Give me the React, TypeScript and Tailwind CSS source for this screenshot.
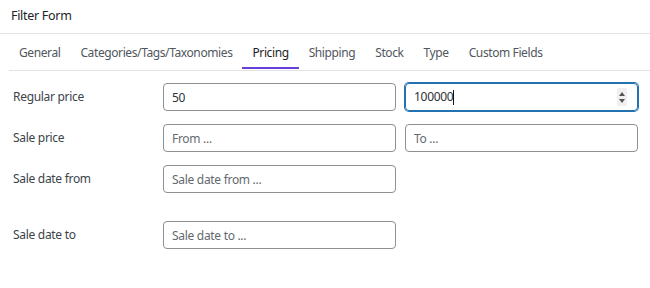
import React from "react";

const font = { fontFamily: '"Noto Sans", "Open Sans", Arial, sans-serif', letterSpacing: "-0.3px" };

function Field({ placeholder, value }: { placeholder?: string; value?: string }) {
  return (
    <input
      readOnly
      defaultValue={value}
      placeholder={placeholder}
      className="w-[233px] h-[28px] rounded-[4px] border border-[#8c8f94] bg-white px-[8px] text-[12px] text-[#2c3338] placeholder:text-[#646970] outline-none"
      style={font}
    />
  );
}

export default function App() {
  const tabs = ["General", "Categories/Tags/Taxonomies", "Pricing", "Shipping", "Stock", "Type", "Custom Fields"];
  return (
    <div className="w-[650px] h-[288px] bg-white text-[#1d2327] overflow-hidden" style={font}>
      <div className="h-[34px] border-b border-[#e3e3e3] px-[11px] flex items-center text-[12.5px] text-[#1d2327]">
        Filter Form
      </div>
      <div className="ml-[9px] h-[37px] border-b border-[#e3e3e3] flex items-stretch">
        {tabs.map((t) => (
          <div
            key={t}
            className={
              "px-[10px] flex items-center text-[12px] tracking-[-0.4px] border-b-2 mb-[1px] pt-[4px] " +
              (t === "Pricing" ? "border-[#6741d9] text-[#1e1e1e]" : "border-transparent text-[#50575e]")
            }
          >
            {t}
          </div>
        ))}
      </div>
      <div className="pl-[13px] pt-[12px] flex flex-col">
        <div className="flex items-center h-[28px]">
          <div className="w-[150px] text-[12px] text-[#3c434a]">Regular price</div>
          <Field value="50" />
          <div className="ml-[9px] w-[233px] h-[28px] rounded-[4px] border border-[#2271b1] shadow-[0_0_0_1px_#2271b1] flex items-center pl-[8px] pr-[10px] text-[12px] text-[#2c3338]">
            <span>100000</span>
            <span className="w-px h-[15px] bg-[#111]" />
            <div className="ml-auto w-[10px] h-[18px] bg-[#f0f0f0] flex flex-col items-center justify-center gap-[3px]">
              <div className="w-0 h-0 border-l-[3px] border-r-[3px] border-b-[4px] border-l-transparent border-r-transparent border-b-[#555]" />
              <div className="w-0 h-0 border-l-[3px] border-r-[3px] border-t-[4px] border-l-transparent border-r-transparent border-t-[#555]" />
            </div>
          </div>
        </div>
        <div className="flex items-center h-[28px] mt-[13px]">
          <div className="w-[150px] text-[12px] text-[#3c434a]">Sale price</div>
          <Field placeholder="From ..." />
          <div className="ml-[9px]">
            <Field placeholder="To ..." />
          </div>
        </div>
        <div className="flex items-center h-[28px] mt-[13px]">
          <div className="w-[150px] text-[12px] text-[#3c434a]">Sale date from</div>
          <Field placeholder="Sale date from ..." />
        </div>
        <div className="flex items-center h-[28px] mt-[28px]">
          <div className="w-[150px] text-[12px] text-[#3c434a]">Sale date to</div>
          <Field placeholder="Sale date to ..." />
        </div>
      </div>
    </div>
  );
}
